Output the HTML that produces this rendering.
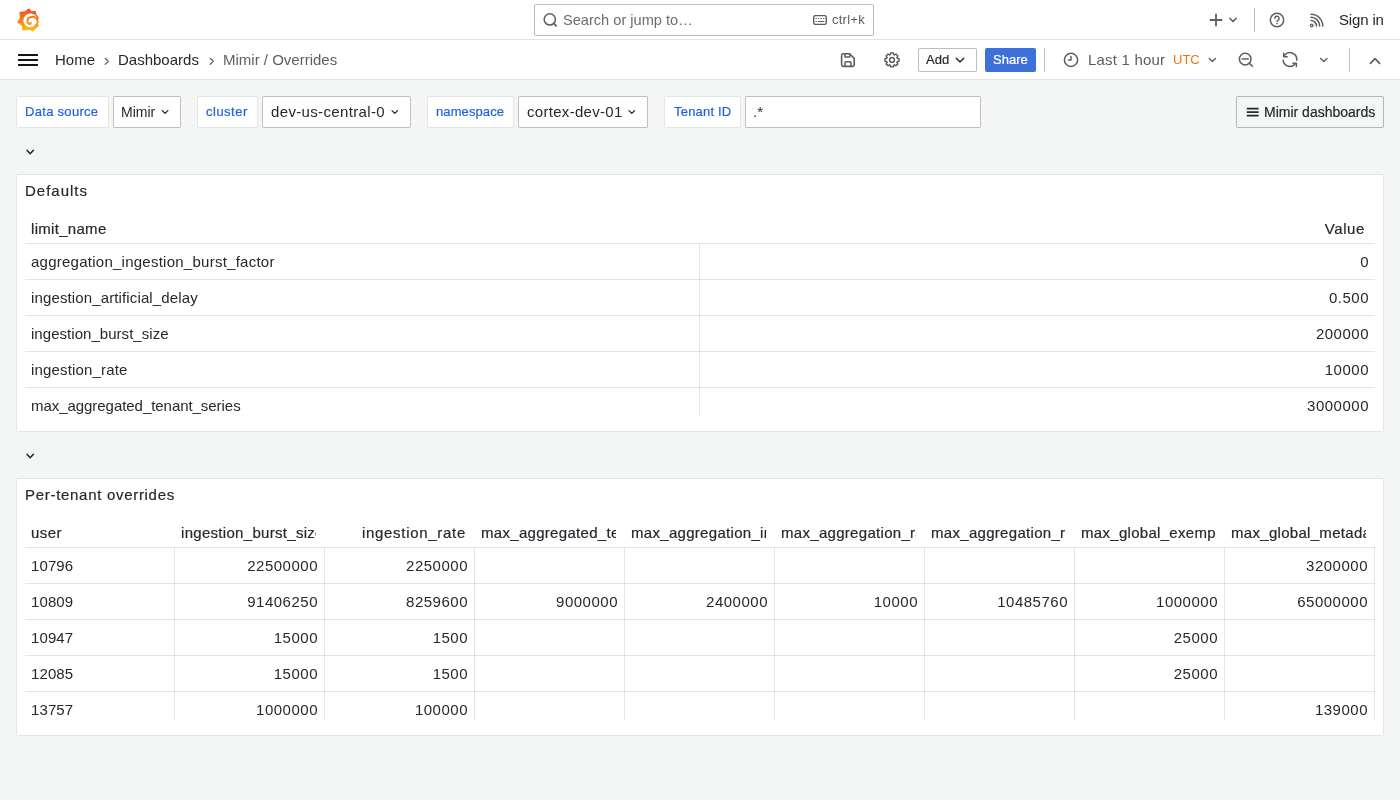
<!DOCTYPE html>
<html><head><meta charset="utf-8">
<style>
*{box-sizing:border-box;margin:0;padding:0}
html,body{width:1400px;height:800px;overflow:hidden;background:#F4F5F5;font-family:"Liberation Sans",sans-serif;color:#24292E}
.a{position:absolute}
.t{position:absolute;white-space:pre;line-height:20px;font-size:15px;will-change:transform}
.m{-webkit-text-stroke:0.2px currentColor}
.box{position:absolute;border:1px solid rgba(36,41,46,0.30);border-radius:2px;background:#fff}
.lbl{position:absolute;border:1px solid rgba(36,41,46,0.12);border-radius:2px;background:#fff}
.clip{position:absolute;overflow:hidden;white-space:pre;line-height:20px;font-size:15px;will-change:transform}
svg.ov{position:absolute;left:0;top:0;width:1400px;height:800px}
</style></head><body>

<div class="a" style="left:0;top:0;width:1400px;height:40px;background:#fff;border-bottom:1px solid rgba(36,41,46,0.12)"></div>
<div class="box" style="left:534px;top:4px;width:340px;height:32px"></div>
<div class="t " style="top:9.5px;font-size:14.6px;color:#6A6D71;left:563px;">Search or jump to…</div>
<div class="t " style="top:10px;font-size:13px;color:#5B5E62;letter-spacing:0.25px;left:832px;">ctrl+k</div>
<div class="t " style="top:10px;font-size:15px;letter-spacing:-0.15px;left:1339px;">Sign in</div>
<div class="a" style="left:0;top:40px;width:1400px;height:40px;background:#fff;border-bottom:1px solid rgba(36,41,46,0.12)"></div>
<div class="t " style="top:50px;font-size:15px;left:55px;">Home</div>
<div class="t " style="top:50px;font-size:15px;left:118px;">Dashboards</div>
<div class="t " style="top:50px;font-size:15px;color:#5B5E62;left:223px;">Mimir / Overrides</div>
<div class="box" style="left:918px;top:48px;width:59px;height:24px"></div>
<div class="t m" style="top:50px;font-size:13px;left:926px;">Add</div>
<div class="a" style="left:985px;top:48px;width:51px;height:24px;background:#3D71D9;border-radius:2px"></div>
<div class="t m" style="top:50px;font-size:13px;color:#fff;left:993px;">Share</div>
<div class="t " style="top:50px;font-size:15px;color:#5B5E62;letter-spacing:0.2px;left:1088px;">Last 1 hour</div>
<div class="t " style="top:50px;font-size:13px;color:#EA7518;left:1173px;">UTC</div>
<div class="lbl" style="left:16px;top:96px;width:93px;height:32px"></div>
<div class="t m" style="top:102px;font-size:13px;color:#1F62E0;letter-spacing:0.3px;left:25px;">Data source</div>
<div class="box" style="left:113px;top:96px;width:68px;height:32px"></div>
<div class="t " style="top:102.0px;font-size:14px;left:121px;">Mimir</div>
<div class="lbl" style="left:197px;top:96px;width:61px;height:32px"></div>
<div class="t m" style="top:102px;font-size:13px;color:#1F62E0;letter-spacing:0.5px;left:206px;">cluster</div>
<div class="box" style="left:262px;top:96px;width:149px;height:32px"></div>
<div class="t " style="top:101.5px;font-size:15px;letter-spacing:0.35px;left:271px;">dev-us-central-0</div>
<div class="lbl" style="left:427px;top:96px;width:87px;height:32px"></div>
<div class="t m" style="top:102px;font-size:13px;color:#1F62E0;letter-spacing:0.1px;left:436px;">namespace</div>
<div class="box" style="left:518px;top:96px;width:130px;height:32px"></div>
<div class="t " style="top:101.5px;font-size:15px;letter-spacing:0.3px;left:527px;">cortex-dev-01</div>
<div class="lbl" style="left:664px;top:96px;width:77px;height:32px"></div>
<div class="t m" style="top:102px;font-size:13px;color:#1F62E0;letter-spacing:0.2px;left:674px;">Tenant ID</div>
<div class="box" style="left:745px;top:96px;width:236px;height:32px"></div>
<div class="t " style="top:101.5px;font-size:15px;left:753px;">.*</div>
<div class="a" style="left:1236px;top:96px;width:148px;height:32px;border:1px solid rgba(36,41,46,0.30);border-radius:2px;background:#F4F5F5"></div>
<div class="t m" style="top:102.0px;font-size:14px;left:1264px;">Mimir dashboards</div>
<div class="lbl" style="left:16px;top:174px;width:1368px;height:258px"></div>
<div class="t m" style="top:181px;font-size:15px;letter-spacing:1.0px;left:25px;">Defaults</div>
<div class="lbl" style="left:16px;top:478px;width:1368px;height:258px"></div>
<div class="t m" style="top:485px;font-size:15px;letter-spacing:0.7px;left:25px;">Per-tenant overrides</div>
<div class="t m" style="top:219px;font-size:15px;letter-spacing:0.3px;left:31px;">limit_name</div>
<div class="t m" style="top:219px;font-size:15px;letter-spacing:0.6px;left:965px;width:400px;text-align:right;">Value</div>
<div class="a" style="left:25px;top:243px;width:1350px;height:173px;overflow:hidden">
<div class="a" style="left:0;top:0px;width:1350px;height:1px;background:rgba(36,41,46,0.12)"></div>
<div class="t" style="left:6px;top:9px;letter-spacing:0.25px">aggregation_ingestion_burst_factor</div>
<div class="t" style="left:675px;width:669px;top:9px;text-align:right;letter-spacing:0.5px">0</div>
<div class="a" style="left:0;top:36px;width:1350px;height:1px;background:rgba(36,41,46,0.12)"></div>
<div class="t" style="left:6px;top:45px;letter-spacing:0.13px">ingestion_artificial_delay</div>
<div class="t" style="left:675px;width:669px;top:45px;text-align:right;letter-spacing:0.5px">0.500</div>
<div class="a" style="left:0;top:72px;width:1350px;height:1px;background:rgba(36,41,46,0.12)"></div>
<div class="t" style="left:6px;top:81px;letter-spacing:0.04px">ingestion_burst_size</div>
<div class="t" style="left:675px;width:669px;top:81px;text-align:right;letter-spacing:0.5px">200000</div>
<div class="a" style="left:0;top:108px;width:1350px;height:1px;background:rgba(36,41,46,0.12)"></div>
<div class="t" style="left:6px;top:117px;letter-spacing:0.17px">ingestion_rate</div>
<div class="t" style="left:675px;width:669px;top:117px;text-align:right;letter-spacing:0.5px">10000</div>
<div class="a" style="left:0;top:144px;width:1350px;height:1px;background:rgba(36,41,46,0.12)"></div>
<div class="t" style="left:6px;top:153px;letter-spacing:-0.05px">max_aggregated_tenant_series</div>
<div class="t" style="left:675px;width:669px;top:153px;text-align:right;letter-spacing:0.5px">3000000</div>
<div class="a" style="left:674px;top:0;width:1px;height:173px;background:rgba(36,41,46,0.12)"></div>
</div>
<div class="t m" style="top:523px;font-size:15px;letter-spacing:0.4px;left:31px;">user</div>
<div class="clip m" style="left:181px;top:523px;width:135px;height:20px;text-align:right;letter-spacing:0.3px">ingestion_burst_size</div>
<div class="clip m" style="left:331px;top:523px;width:135px;height:20px;text-align:right;letter-spacing:0.7px">ingestion_rate</div>
<div class="clip m" style="left:481px;top:523px;width:135px;height:20px;text-align:right;letter-spacing:0.3px">max_aggregated_tenant_series</div>
<div class="clip m" style="left:631px;top:523px;width:135px;height:20px;text-align:right;letter-spacing:0.3px">max_aggregation_ingestion_burst_factor</div>
<div class="clip m" style="left:781px;top:523px;width:135px;height:20px;text-align:right;letter-spacing:0.3px">max_aggregation_rate</div>
<div class="clip m" style="left:931px;top:523px;width:135px;height:20px;text-align:right;letter-spacing:0.3px">max_aggregation_rules</div>
<div class="clip m" style="left:1081px;top:523px;width:135px;height:20px;text-align:right;letter-spacing:0.3px">max_global_exemplars_per_user</div>
<div class="clip m" style="left:1231px;top:523px;width:135px;height:20px;text-align:right;letter-spacing:0.3px">max_global_metadata_per_user</div>
<div class="a" style="left:25px;top:547px;width:1350px;height:173px;overflow:hidden">
<div class="a" style="left:0;top:0px;width:1350px;height:1px;background:rgba(36,41,46,0.12)"></div>
<div class="t" style="left:6px;top:9px;letter-spacing:0.1px">10796</div>
<div class="t" style="left:150px;width:143px;top:9px;text-align:right;letter-spacing:0.5px">22500000</div>
<div class="t" style="left:300px;width:143px;top:9px;text-align:right;letter-spacing:0.5px">2250000</div>
<div class="t" style="left:1200px;width:143px;top:9px;text-align:right;letter-spacing:0.5px">3200000</div>
<div class="a" style="left:0;top:36px;width:1350px;height:1px;background:rgba(36,41,46,0.12)"></div>
<div class="t" style="left:6px;top:45px;letter-spacing:0.1px">10809</div>
<div class="t" style="left:150px;width:143px;top:45px;text-align:right;letter-spacing:0.5px">91406250</div>
<div class="t" style="left:300px;width:143px;top:45px;text-align:right;letter-spacing:0.5px">8259600</div>
<div class="t" style="left:450px;width:143px;top:45px;text-align:right;letter-spacing:0.5px">9000000</div>
<div class="t" style="left:600px;width:143px;top:45px;text-align:right;letter-spacing:0.5px">2400000</div>
<div class="t" style="left:750px;width:143px;top:45px;text-align:right;letter-spacing:0.5px">10000</div>
<div class="t" style="left:900px;width:143px;top:45px;text-align:right;letter-spacing:0.5px">10485760</div>
<div class="t" style="left:1050px;width:143px;top:45px;text-align:right;letter-spacing:0.5px">1000000</div>
<div class="t" style="left:1200px;width:143px;top:45px;text-align:right;letter-spacing:0.5px">65000000</div>
<div class="a" style="left:0;top:72px;width:1350px;height:1px;background:rgba(36,41,46,0.12)"></div>
<div class="t" style="left:6px;top:81px;letter-spacing:0.1px">10947</div>
<div class="t" style="left:150px;width:143px;top:81px;text-align:right;letter-spacing:0.5px">15000</div>
<div class="t" style="left:300px;width:143px;top:81px;text-align:right;letter-spacing:0.5px">1500</div>
<div class="t" style="left:1050px;width:143px;top:81px;text-align:right;letter-spacing:0.5px">25000</div>
<div class="a" style="left:0;top:108px;width:1350px;height:1px;background:rgba(36,41,46,0.12)"></div>
<div class="t" style="left:6px;top:117px;letter-spacing:0.1px">12085</div>
<div class="t" style="left:150px;width:143px;top:117px;text-align:right;letter-spacing:0.5px">15000</div>
<div class="t" style="left:300px;width:143px;top:117px;text-align:right;letter-spacing:0.5px">1500</div>
<div class="t" style="left:1050px;width:143px;top:117px;text-align:right;letter-spacing:0.5px">25000</div>
<div class="a" style="left:0;top:144px;width:1350px;height:1px;background:rgba(36,41,46,0.12)"></div>
<div class="t" style="left:6px;top:153px;letter-spacing:0.1px">13757</div>
<div class="t" style="left:150px;width:143px;top:153px;text-align:right;letter-spacing:0.5px">1000000</div>
<div class="t" style="left:300px;width:143px;top:153px;text-align:right;letter-spacing:0.5px">100000</div>
<div class="t" style="left:1200px;width:143px;top:153px;text-align:right;letter-spacing:0.5px">139000</div>
<div class="a" style="left:149px;top:0;width:1px;height:173px;background:rgba(36,41,46,0.12)"></div>
<div class="a" style="left:299px;top:0;width:1px;height:173px;background:rgba(36,41,46,0.12)"></div>
<div class="a" style="left:449px;top:0;width:1px;height:173px;background:rgba(36,41,46,0.12)"></div>
<div class="a" style="left:599px;top:0;width:1px;height:173px;background:rgba(36,41,46,0.12)"></div>
<div class="a" style="left:749px;top:0;width:1px;height:173px;background:rgba(36,41,46,0.12)"></div>
<div class="a" style="left:899px;top:0;width:1px;height:173px;background:rgba(36,41,46,0.12)"></div>
<div class="a" style="left:1049px;top:0;width:1px;height:173px;background:rgba(36,41,46,0.12)"></div>
<div class="a" style="left:1199px;top:0;width:1px;height:173px;background:rgba(36,41,46,0.12)"></div>
<div class="a" style="left:1349px;top:0;width:1px;height:173px;background:rgba(36,41,46,0.12)"></div>
</div>
<svg class="ov" viewBox="0 0 1400 800" fill="none" stroke-linecap="round" stroke-linejoin="round"><defs><linearGradient id="lg" gradientUnits="userSpaceOnUse" x1="0" y1="8" x2="0" y2="32"><stop offset="0" stop-color="#F04E23"/><stop offset="0.45" stop-color="#F47B20"/><stop offset="1" stop-color="#FBC80B"/></linearGradient></defs><path fill="url(#lg)" stroke="none" d="M29 8.2 L31.4 10.9 L35.8 11 L36.4 14.4 L38.6 17 L38.8 19.2 L36.6 19.9 L36.8 23.8 L39 24.9 L38.9 25.4 L36.4 28 L32.6 31.8 L29.8 30 L22.3 30.5 L22 26 L17 22.3 L20 17.8 L19.3 12 L25 11.2 Z"/><circle cx="30.4" cy="20.4" r="7.0" fill="#fff" stroke="none"/><path d="M34.6 26.2 A4.7 4.7 0 0 0 30.6 17.2 A3.5 3.5 0 0 0 27.4 21.2 A2.7 2.7 0 0 0 30.1 23.9 A1 1 0 0 0 30.9 23.1" stroke="url(#lg)" stroke-width="2" stroke-linecap="round" fill="none"/><path d="M18.8 55H37.2M18.8 60H37.2M18.8 65H37.2" stroke="#111418" stroke-width="2"/><path d="M105.2 58.3L108.3 61.3L105.2 64.3M210.2 58.3L213.3 61.3L210.2 64.3" stroke="#5B5E62" stroke-width="1.2"/><circle cx="549.8" cy="19.4" r="5.6" stroke="#5B5E62" stroke-width="1.5"/><path d="M554 23.6L556.3 25.9" stroke="#5B5E62" stroke-width="1.6"/><rect x="813.7" y="15.6" width="12.6" height="8.8" rx="1.6" stroke="#5B5E62" stroke-width="1.4"/><path d="M816 18.5h.4M818.4 18.5h.4M820.8 18.5h.4M823.4 18.5h.4M816 21.5h.3M818.3 21.5h4.2M823.6 21.5h.3" stroke="#5B5E62" stroke-width="1.2"/><path d="M1210.5 20H1221.5M1216 14.5V25.5" stroke="#5B5E62" stroke-width="1.8"/><path d="M1229.8 18.2L1233 21.6L1236.3 18.2" stroke="#5B5E62" stroke-width="1.5"/><path d="M1254.5 8V32" stroke="rgba(36,41,46,0.30)" stroke-width="1" stroke-linecap="butt"/><circle cx="1277" cy="20" r="6.7" stroke="#5B5E62" stroke-width="1.5"/><path d="M1274.9 18.4A2.1 2.1 0 1 1 1277.6 20.3C1277.1 20.6 1277 20.9 1277 21.6" stroke="#5B5E62" stroke-width="1.4"/><circle cx="1277" cy="23.6" r="0.8" fill="#5B5E62" stroke="none"/><circle cx="1311.7" cy="25.4" r="1.3" stroke="#5B5E62" stroke-width="1.3"/><path d="M1311 20.5A5.5 5.5 0 0 1 1316.5 26M1311 17.3A8.7 8.7 0 0 1 1319.7 26M1311 14.2A11.8 11.8 0 0 1 1322.8 26" stroke="#5B5E62" stroke-width="1.5"/><path d="M849.6 53.8H843.2A1.6 1.6 0 0 0 841.6 55.4V64.8A1.6 1.6 0 0 0 843.2 66.4H852.6A1.6 1.6 0 0 0 854.2 64.8V58.4Z" stroke="#5B5E62" stroke-width="1.6"/><path d="M844.9 54V56.3A.8.8 0 0 0 845.7 57.1H849.1A.8.8 0 0 0 849.9 56.3V54.3M845 66.2V62.7A.9.9 0 0 1 845.9 61.8H850A.9.9 0 0 1 850.9 62.7V66.2" stroke="#5B5E62" stroke-width="1.5"/><path d="M890.25 54.68L890.65 52.93L893.35 52.93L893.75 54.68L894.45 54.98L895.97 54.01L897.89 55.93L896.92 57.45L897.22 58.15L898.97 58.55L898.97 61.25L897.22 61.65L896.92 62.35L897.89 63.87L895.97 65.79L894.45 64.82L893.75 65.12L893.35 66.87L890.65 66.87L890.25 65.12L889.55 64.82L888.03 65.79L886.11 63.87L887.08 62.35L886.78 61.65L885.03 61.25L885.03 58.55L886.78 58.15L887.08 57.45L886.11 55.93L888.03 54.01L889.55 54.98Z" stroke="#5B5E62" stroke-width="1.5"/><circle cx="892" cy="59.9" r="2.4" stroke="#5B5E62" stroke-width="1.5"/><path d="M956.3 58.3L960 62L963.7 58.3" stroke="#24292E" stroke-width="1.5"/><path d="M1044.5 48V72M1349.5 48V72" stroke="rgba(36,41,46,0.30)" stroke-width="1" stroke-linecap="butt"/><circle cx="1071" cy="59.9" r="6.6" stroke="#5B5E62" stroke-width="1.5"/><path d="M1071 56.4V60.1H1068.4" stroke="#5B5E62" stroke-width="1.5"/><path d="M1209.2 58.4L1212.3 61.5L1215.4 58.4" stroke="#5B5E62" stroke-width="1.4"/><circle cx="1245.2" cy="59.1" r="5.8" stroke="#5B5E62" stroke-width="1.5"/><path d="M1242.2 59.1H1248.3M1249.5 63.4L1252.4 66.3" stroke="#5B5E62" stroke-width="1.5"/><path d="M1284.6 55.3A6.8 6.8 0 0 1 1296.7 60.3M1283.2 60.3A6.8 6.8 0 0 0 1294.8 64.4" stroke="#5B5E62" stroke-width="1.5"/><path d="M1283.7 53.3V56.7H1287.2M1296.4 66.6V63.2H1292.9" stroke="#5B5E62" stroke-width="1.5"/><path d="M1320.6 58.4L1323.8 61.6L1327 58.4" stroke="#5B5E62" stroke-width="1.4"/><path d="M1370.4 63.3L1375 58.7L1379.6 63.3" stroke="#5B5E62" stroke-width="1.7"/><path d="M162.3 110.6L165.10000000000002 113.4L167.9 110.6" stroke="#24292E" stroke-width="1.3"/><path d="M392 110.6L394.8 113.4L397.6 110.6" stroke="#24292E" stroke-width="1.3"/><path d="M629 110.6L631.8 113.4L634.6 110.6" stroke="#24292E" stroke-width="1.3"/><path d="M1246.8 108.6H1258.6M1246.8 112.1H1258.6M1246.8 115.6H1258.6" stroke="#24292E" stroke-width="1.6" stroke-linecap="butt"/><path d="M27 150.3L30.2 153.70000000000002L33.4 150.3" stroke="#24292E" stroke-width="1.5"/><path d="M27 454.3L30.2 457.7L33.4 454.3" stroke="#24292E" stroke-width="1.5"/></svg>
</body></html>
